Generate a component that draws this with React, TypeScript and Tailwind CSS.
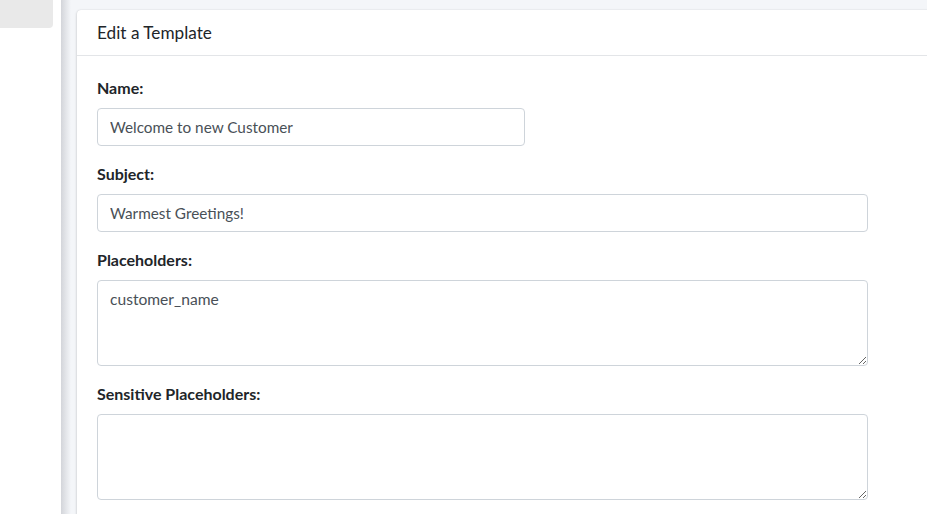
import React from 'react';

const fieldClass =
  'block h-[38px] rounded-[4px] border border-[#ced4da] bg-white px-3 text-[15.3px] text-[#495057] outline-none';

const areaClass =
  'block h-[86px] w-[771px] rounded-[4px] border border-[#ced4da] bg-white px-3 py-[6px] text-[15.6px] leading-6 text-[#495057] outline-none';

export default function App() {
  return (
    <div className="flex h-[514px] w-[927px] overflow-hidden bg-[#f4f6f9] font-['Lato',sans-serif] text-[#212529]">
      {/* Sidebar */}
      <div className="w-[61px] shrink-0 bg-white">
        <div className="h-[28px] w-[53px] rounded-br-[4px] bg-[#e9e9e9]" />
      </div>

      {/* Content */}
      <div className="relative flex-1 pl-4 pt-[10px]">
        <div className="absolute inset-y-0 left-0 w-[10px] bg-gradient-to-r from-[#d3d5da] to-[#f4f6f9]" />
        <div className="relative w-[900px] rounded-[4px] bg-white shadow-[0_0_1px_rgba(0,0,0,0.125),0_1px_3px_rgba(0,0,0,0.2)]">
          <div className="border-b border-[#e3e5e8] px-5 py-3">
            <h3 className="text-[17.2px] leading-[21px]">Edit a Template</h3>
          </div>
          <div className="p-5">
            <div className="mb-4">
              <label className="mb-2 block text-[16px] font-bold leading-6">Name:</label>
              <input className={`${fieldClass} w-[428px]`} readOnly defaultValue="Welcome to new Customer" />
            </div>
            <div className="mb-4">
              <label className="mb-2 block text-[16px] font-bold leading-6">Subject:</label>
              <input className={`${fieldClass} w-[771px]`} readOnly defaultValue="Warmest Greetings!" />
            </div>
            <div className="mb-4">
              <label className="mb-2 block text-[16px] font-bold leading-6">Placeholders:</label>
              <textarea className={areaClass} readOnly defaultValue="customer_name" />
            </div>
            <div className="mb-4">
              <label className="mb-2 block text-[16px] font-bold leading-6">Sensitive Placeholders:</label>
              <textarea className={areaClass} readOnly />
            </div>
          </div>
        </div>
      </div>
    </div>
  );
}
